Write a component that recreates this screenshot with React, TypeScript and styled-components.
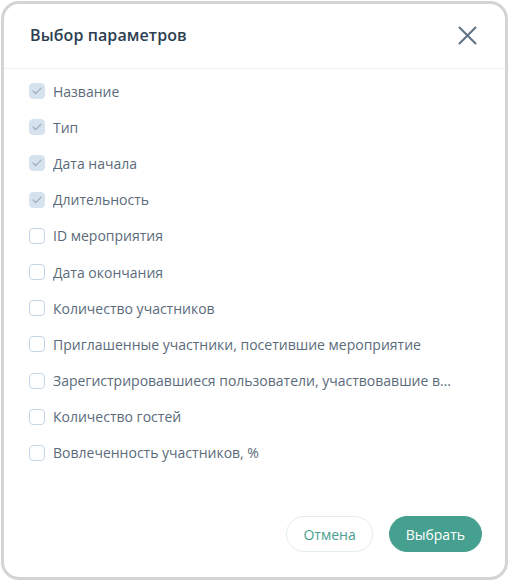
import React, { useState } from "react";
import styled, { createGlobalStyle } from "styled-components";

const Global = createGlobalStyle`
  html, body { margin: 0; padding: 0; background: #ffffff; }
  body { font-family: "Open Sans", "Noto Sans", sans-serif; }
  * { box-sizing: border-box; }
`;

const Modal = styled.div`
  margin: 1px 2px 0 1px;
  width: 507px;
  height: 579px;
  border: 3px solid #d4d4d4;
  border-radius: 18px;
  background: #fff;
  display: flex;
  flex-direction: column;
`;

const Header = styled.div`
  height: 65px;
  display: flex;
  align-items: center;
  justify-content: space-between;
  padding: 0 27px 2px 26px;
  border-bottom: 1px solid #edf2f6;
`;

const Title = styled.h2`
  margin: 0;
  font-size: 16px;
  font-weight: 600;
  color: #2c3e50;
  letter-spacing: 0.1px;
`;

const CloseBtn = styled.button`
  border: 0;
  background: none;
  padding: 0;
  width: 22px;
  height: 22px;
  display: flex;
  align-items: center;
  justify-content: center;
  cursor: pointer;
`;

const List = styled.div`
  padding: 4px 0 0 25px;
  display: flex;
  flex-direction: column;
`;

const Row = styled.label`
  height: 36.2px;
  display: flex;
  align-items: center;
  gap: 8px;
  cursor: pointer;
`;

const Box = styled.span<{ $checked: boolean }>`
  width: 16px;
  height: 16px;
  border-radius: 4px;
  flex: none;
  display: flex;
  align-items: center;
  justify-content: center;
  background: ${(p) => (p.$checked ? "#d6e2ed" : "#fff")};
  border: 1px solid ${(p) => (p.$checked ? "#d6e2ed" : "#c5d6e8")};
`;

const Label = styled.span`
  font-size: 14px;
  color: #5b6b7b;
  white-space: nowrap;
  overflow: hidden;
  text-overflow: ellipsis;
  max-width: 400px;
`;

const Footer = styled.div`
  margin-top: auto;
  display: flex;
  justify-content: flex-end;
  gap: 16px;
  padding: 0 23px 25px 0;
`;

const Button = styled.button<{ $primary?: boolean }>`
  height: 36px;
  border-radius: 18px;
  font-family: inherit;
  font-size: 14px;
  font-weight: 500;
  padding: 0 16px;
  cursor: pointer;
  background: ${(p) => (p.$primary ? "#46a08f" : "#fff")};
  color: ${(p) => (p.$primary ? "#ffffff" : "#4aa090")};
  border: 1px solid ${(p) => (p.$primary ? "#46a08f" : "#e3edf2")};
`;

const items: { label: string; checked: boolean }[] = [
  { label: "Название", checked: true },
  { label: "Тип", checked: true },
  { label: "Дата начала", checked: true },
  { label: "Длительность", checked: true },
  { label: "ID мероприятия", checked: false },
  { label: "Дата окончания", checked: false },
  { label: "Количество участников", checked: false },
  { label: "Приглашенные участники, посетившие мероприятие", checked: false },
  { label: "Зарегистрировавшиеся пользователи, участвовавшие в мероприятии", checked: false },
  { label: "Количество гостей", checked: false },
  { label: "Вовлеченность участников, %", checked: false },
];

export default function App() {
  const [state] = useState(items);
  return (
    <>
      <Global />
      <Modal>
        <Header>
          <Title>Выбор параметров</Title>
          <CloseBtn aria-label="Закрыть">
            <svg width="19" height="19" viewBox="0 0 19 19">
              <path d="M1.5 1.5 L17.5 17.5 M17.5 1.5 L1.5 17.5" stroke="#5d7183" strokeWidth="2" strokeLinecap="round" />
            </svg>
          </CloseBtn>
        </Header>
        <List>
          {state.map((it) => (
            <Row key={it.label}>
              <Box $checked={it.checked}>
                {it.checked && (
                  <svg width="10" height="8" viewBox="0 0 10 8">
                    <path d="M1 4 L3.8 6.6 L9 1.2" stroke="#a6b6c6" strokeWidth="1.5" fill="none" strokeLinecap="round" strokeLinejoin="round" />
                  </svg>
                )}
              </Box>
              <Label>{it.label}</Label>
            </Row>
          ))}
        </List>
        <Footer>
          <Button>Отмена</Button>
          <Button $primary>Выбрать</Button>
        </Footer>
      </Modal>
    </>
  );
}
